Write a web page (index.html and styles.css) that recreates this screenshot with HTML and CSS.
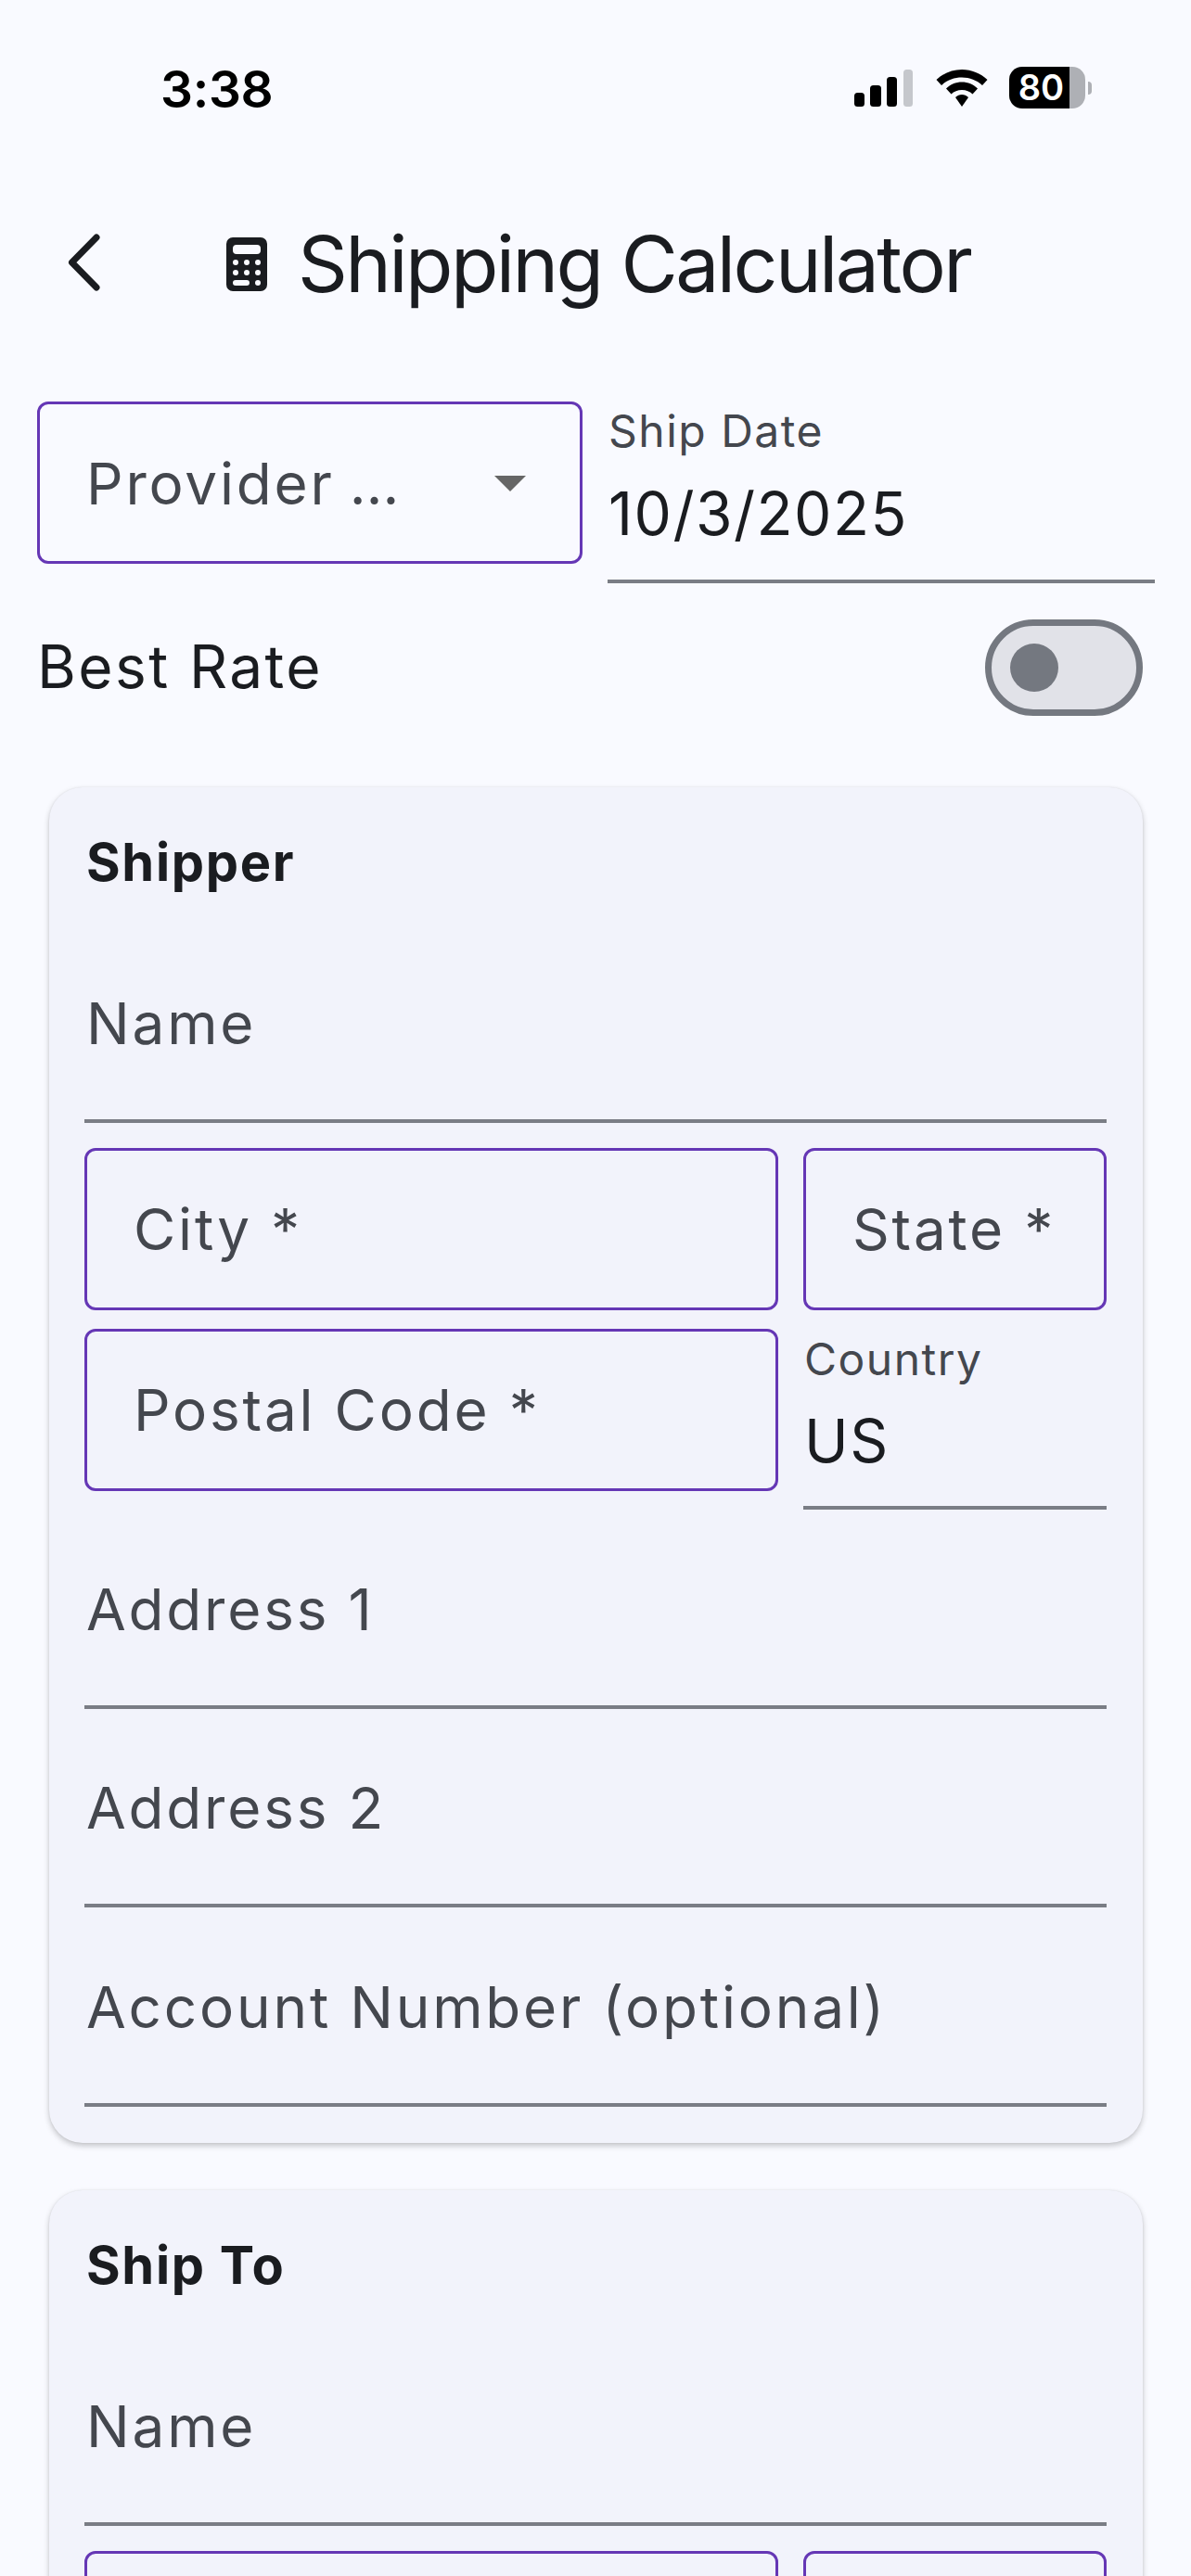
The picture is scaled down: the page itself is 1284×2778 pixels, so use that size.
FILE: index.html
```html
<!DOCTYPE html>
<html lang="en">
<head>
<meta charset="utf-8">
<title>Shipping Calculator</title>
<link rel="stylesheet" href="styles.css">
</head>
<body>
<div class="screen">
  <header class="status">
    <span class="time">3:38</span>
    <div class="status-icons">
      <svg class="signal" width="64" height="40" viewBox="0 0 64 40"><rect x="0" y="25" width="11" height="15" rx="3.5" fill="#000"/><rect x="17" y="17" width="12" height="23" rx="3.5" fill="#000"/><rect x="35" y="8" width="11" height="32" rx="3.5" fill="#000"/><rect x="53" y="0" width="10" height="40" rx="3.5" fill="#c5c7cc"/></svg>
      <svg class="wifi" width="56" height="40" viewBox="0 0 56 40"><path d="M28 0C17.500 0 8 4 0.500 11L6 17C12 11.500 19.500 8.500 28 8.500S44 11.500 50 17L55.500 11C48 4 38.500 0 28 0Z" fill="#000"/><path d="M28 13.500C21.500 13.500 15.500 16 11 20.500L16.500 26.500C19.500 23.500 23.500 22 28 22S36.500 23.500 39.500 26.500L45 20.500C40.500 16 34.500 13.500 28 13.500Z" fill="#000"/><path d="M28 27C25.500 27 23 28 21 30L28 40L35 30C33 28 30.500 27 28 27Z" fill="#000"/></svg>
      <div class="battery">
        <div class="battery-body"><span class="battery-level">80</span><span class="battery-rest"></span></div>
        <span class="battery-nub"></span>
      </div>
    </div>
  </header>

  <div class="appbar">
    <svg class="back" width="42" height="66" viewBox="0 0 42 66"><path d="M36 4L9.500 31L36 58" fill="none" stroke="#1a1c20" stroke-width="7" stroke-linecap="round" stroke-linejoin="round"/></svg>
    <svg class="calc" width="44" height="58" viewBox="0 0 44 58"><path fill="#1a1c20" fill-rule="evenodd" d="M7 0H37A7 7 0 0 1 44 7V51A7 7 0 0 1 37 58H7A7 7 0 0 1 0 51V7A7 7 0 0 1 7 0ZM11 8A4 4 0 0 0 7 12V14A4 4 0 0 0 11 18H33A4 4 0 0 0 37 14V12A4 4 0 0 0 33 8ZM10 46A3 3 0 0 0 10 52H22A3 3 0 0 0 22 46Z"/><g fill="#f9faff"><circle cx="10" cy="27" r="3"/><circle cx="22" cy="27" r="3"/><circle cx="34" cy="27" r="3"/><circle cx="10" cy="38" r="3"/><circle cx="22" cy="38" r="3"/><circle cx="34" cy="38" r="3"/><circle cx="34" cy="49" r="3"/></g></svg>
    <h1 class="title">Shipping Calculator</h1>
  </div>

  <main class="content">
    <div class="top-row">
      <div class="select">
        <span class="label select-label">Provider …</span>
        <svg class="caret" width="34" height="17" viewBox="0 0 34 17"><path d="M0 0H34L17 17Z" fill="#666666"/></svg>
      </div>
      <div class="date">
        <span class="float-label">Ship Date</span>
        <span class="value">10/3/2025</span>
      </div>
    </div>

    <div class="best">
      <span class="best-label">Best Rate</span>
      <div class="toggle"><span class="knob"></span></div>
    </div>

    <section class="card">
      <h2 class="card-title">Shipper</h2>
      <div class="line first"><span class="label">Name</span></div>
      <div class="pair">
        <div class="box"><span class="label">City *</span></div>
        <div class="box"><span class="label">State *</span></div>
        <div class="box"><span class="label">Postal Code *</span></div>
        <div class="country">
          <span class="float-label">Country</span>
          <span class="value">US</span>
        </div>
      </div>
      <div class="line"><span class="label">Address 1</span></div>
      <div class="line"><span class="label">Address 2</span></div>
      <div class="line"><span class="label">Account Number (optional)</span></div>
    </section>

    <section class="card">
      <h2 class="card-title">Ship To</h2>
      <div class="line first"><span class="label">Name</span></div>
      <div class="pair">
        <div class="box"></div>
        <div class="box"></div>
      </div>
    </section>
  </main>
</div>
</body>
</html>
```
FILE: styles.css
```css
* { box-sizing: border-box; }
html, body { margin: 0; padding: 0; height: 2778px; overflow: hidden; background: #f9faff; }
body { font-family: Inter, "Liberation Sans", sans-serif; color: #1a1c20; }
.screen { width: 1284px; height: 2778px; overflow: hidden; }

.status { height: 190px; display: flex; align-items: flex-start; justify-content: space-between; padding: 66px 107px 0 173px; }
.time { font-size: 55px; font-weight: 600; line-height: 60px; letter-spacing: -0.300px; color: #000; }
.status-icons { display: flex; align-items: flex-start; padding-top: 6px; }
.signal { margin-top: 3px; margin-right: 24px; }
.wifi { margin-top: 3px; margin-right: 23px; }
.battery { display: flex; align-items: center; }
.battery-body { width: 82px; height: 45px; border-radius: 14px; overflow: hidden; display: flex; }
.battery-level { width: 65px; background: #000; color: #fff; font-size: 38px; font-weight: 600; line-height: 45px; text-align: center; padding-left: 4px; }
.battery-rest { flex: 1; background: #aeb0b5; }
.battery-nub { width: 4px; height: 14px; margin-left: 3px; background: #aeb0b5; border-radius: 0 7px 7px 0; }

.appbar { height: 190px; display: flex; align-items: center; padding-left: 68px; }
.back { flex: none; margin-right: 134px; }
.calc { flex: none; margin-right: 33px; }
.title { margin: 0; font-size: 84px; font-weight: 400; line-height: 100px; letter-spacing: -2.600px; }

.content { padding: 53px 39px 0 40px; }
.top-row { display: flex; align-items: flex-start; gap: 27px; height: 195px; }
.select { width: 588px; height: 175px; border: 3px solid #6537b5; border-radius: 12px; display: flex; align-items: center; justify-content: space-between; padding: 2px 58px 0 50px; }
.label { font-size: 62px; letter-spacing: 2.800px; line-height: 75px; color: #44474e; }
.select-label { word-spacing: -4px; }
.date { width: 590px; height: 196px; border-bottom: 4px solid #7a7d85; display: flex; flex-direction: column; padding: 2px 0 0 1px; }
.float-label { font-size: 48px; letter-spacing: 1.500px; line-height: 60px; color: #44474e; }
.value { font-size: 64px; letter-spacing: 1.500px; line-height: 80px; margin-top: 19px; color: #1a1c20; }

.best { display: flex; align-items: center; justify-content: space-between; height: 130px; margin-top: 27px; padding-right: 13px; }
.best-label { font-size: 64px; letter-spacing: 2.400px; line-height: 75px; margin-top: -3px; }
.toggle { width: 170px; height: 104px; border: 7px solid #747880; border-radius: 52px; background: #e1e2e8; display: flex; align-items: center; padding-left: 20px; }
.knob { width: 52px; height: 52px; border-radius: 50%; background: #747880; }

.card { margin: 64px 13px 51px; padding: 0 39px 39px 38px; border-radius: 36px; background: #f2f3fb; box-shadow: 0 3px 6px rgba(0, 0, 0, 0.22), 0 0 2px rgba(0, 0, 0, 0.08); }
.card + .card { margin-top: 0; }
.card-title { margin: 0; padding-top: 48px; font-size: 56px; font-weight: 700; line-height: 66px; letter-spacing: 1.700px; padding-left: 2px; color: #1a1c20; }
.line { height: 214.500px; border-bottom: 4px solid #7a7d85; display: flex; align-items: flex-end; padding: 0 2px 66px; }
.line.first { height: 248px; }
.pair { display: grid; grid-template-columns: 748px 327px; column-gap: 27px; row-gap: 20px; margin-top: 27px; align-items: start; }
.box { height: 175px; border: 3px solid #6537b5; border-radius: 12px; display: flex; align-items: center; padding-left: 50px; }
.country { height: 195px; border-bottom: 4px solid #7a7d85; display: flex; flex-direction: column; padding: 3px 0 0 1px; }
.country .value { margin-top: 18px; }
```
